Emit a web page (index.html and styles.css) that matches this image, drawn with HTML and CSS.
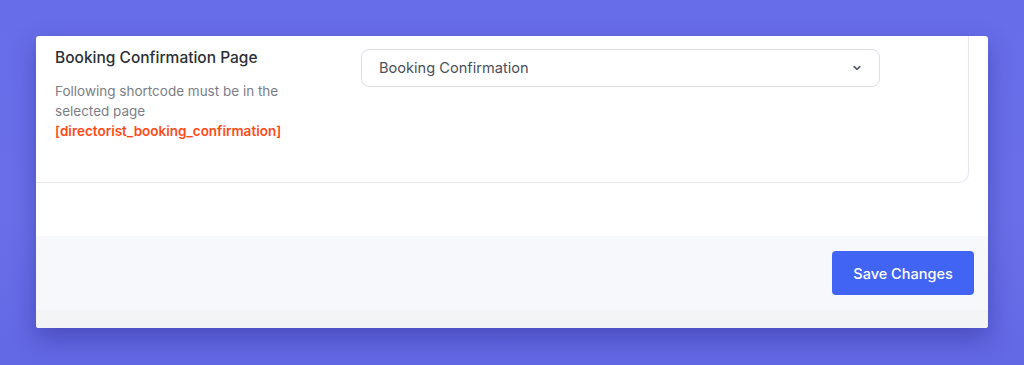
FILE: index.html
```html
<!DOCTYPE html>
<html lang="en">
<head>
    <meta charset="UTF-8">
    <meta name="viewport" content="width=device-width, initial-scale=1.0">
    <title>Booking Settings</title>
    <link rel="stylesheet" href="styles.css">
</head>
<body>
    <div class="card">
        <div class="settings-panel">
            <div class="field-row">
                <div class="field-label">
                    <h3>Booking Confirmation Page</h3>
                    <p>Following shortcode must be in the selected page</p>
                    <code>[directorist_booking_confirmation]</code>
                </div>
                <div class="field-control">
                    <div class="select">
                        <span>Booking Confirmation</span>
                        <svg width="12" height="12" viewBox="0 0 12 12">
                            <path d="M3.2 4.6 L6 7.4 L8.8 4.6" fill="none" stroke="#5b5f6b" stroke-width="1.7" stroke-linecap="round" stroke-linejoin="round"/>
                        </svg>
                    </div>
                </div>
            </div>
        </div>
        <div class="spacer"></div>
        <div class="footer">
            <button class="save-btn">Save Changes</button>
        </div>
        <div class="footer-bottom"></div>
    </div>
</body>
</html>
```

FILE: styles.css
```css
html, body {
    height: 100%;
}
body {
    margin: 0;
    padding: 36px;
    box-sizing: border-box;
    background: linear-gradient(180deg, #676de8 0%, #6a6fe9 60%, #6267e3 100%);
    font-family: Inter, "Noto Sans", Arial, sans-serif;
    color: #2c2f36;
}
.card {
    width: 952px;
    background-color: #fff;
    border-radius: 3px;
    overflow: hidden;
    box-shadow: 0 10px 24px rgba(40, 40, 140, 0.45);
}
.settings-panel {
    width: 933px;
    height: 147px;
    box-sizing: border-box;
    border-right: 1px solid #e5e6ee;
    border-bottom: 1px solid #e5e6ee;
    border-bottom-right-radius: 10px;
}
.field-row {
    display: flex;
    padding: 10px 0 0 19px;
}
.field-label {
    width: 306px;
}
.field-label h3 {
    margin: 0 0 11px;
    font-size: 15.5px;
    line-height: 24px;
    font-weight: 500;
    color: #2c2f36;
}
.field-label p {
    margin: 0;
    width: 240px;
    font-size: 13.5px;
    line-height: 20px;
    color: #7b7e87;
}
.field-label code {
    display: block;
    font-family: inherit;
    font-size: 13.5px;
    line-height: 20px;
    font-weight: 600;
    color: #ff4a17;
}
.field-control {
    padding-top: 3px;
}
.select {
    width: 519px;
    height: 38px;
    box-sizing: border-box;
    border: 1px solid #dcdee6;
    border-radius: 8px;
    display: flex;
    align-items: center;
    justify-content: space-between;
    padding: 0 16px 0 17px;
    font-size: 14.6px;
    color: #4b4f5a;
}
.spacer {
    height: 53px;
}
.footer {
    background-color: #f7f8fb;
    height: 74px;
    display: flex;
    justify-content: flex-end;
    align-items: flex-start;
    padding: 15px 14px 0 0;
    box-sizing: border-box;
}
.save-btn {
    width: 142px;
    height: 44px;
    border: none;
    border-radius: 4px;
    background-color: #4164f4;
    color: #fff;
    font-family: inherit;
    font-size: 14.5px;
    font-weight: 500;
    cursor: pointer;
}
.footer-bottom {
    height: 18px;
    background-color: #f3f4f6;
}
```
